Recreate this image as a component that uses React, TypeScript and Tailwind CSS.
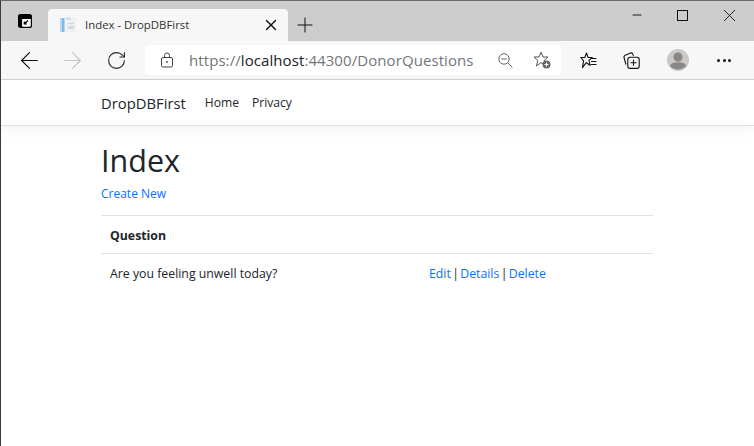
import { Minus, Plus, RotateCw, X, ArrowLeft, ArrowRight } from "lucide-react";

function TabIcon() {
  return (
    <svg width="16" height="16" viewBox="0 0 16 16" fill="none" stroke="#000" strokeWidth="1.2">
      <rect x="1.6" y="1.6" width="12.8" height="12.8" rx="2" fill="#fff" />
      <path d="M2 3a1 1 0 0 1 1-1h10a1 1 0 0 1 1 1v2.4H2z" fill="#000" />
      <path d="M2 3v10.5h2.5V3z" fill="#000" />
      <path d="M11 7.5 7.5 10.8 M7.3 8.4 V11 H10" strokeWidth="1.2" />
    </svg>
  );
}

function Favicon() {
  return (
    <svg width="16" height="16" viewBox="0 0 16 16" fill="none">
      <rect x="0" y="1" width="6" height="14" fill="#b5d8f1" />
      <rect x="2" y="1" width="2" height="14" fill="#7fb9e6" />
      <rect x="5" y="1" width="11" height="14" fill="#eef1f4" />
      <rect x="6" y="0" width="5" height="3" fill="#d9dfe4" />
      <rect x="8" y="6" width="6" height="1" fill="#ced4da" />
      <rect x="8" y="9" width="6" height="3" fill="#d6dbe0" />
    </svg>
  );
}

function Lock() {
  return (
    <svg width="14" height="16" viewBox="0 0 14 16" fill="none" stroke="#444" strokeWidth="1">
      <rect x="1.5" y="5.5" width="11" height="9.5" rx="1.5" />
      <path d="M4.5 5.5V3.5a2.5 2.5 0 0 1 5 0v2" />
      <circle cx="7" cy="10" r="0.9" fill="#444" stroke="none" />
    </svg>
  );
}

function ZoomMinus() {
  return (
    <svg width="15" height="15" viewBox="0 0 15 15" fill="none" stroke="#666" strokeWidth="1">
      <circle cx="6" cy="6" r="5.2" />
      <path d="M3.4 6h5.2M9.8 9.8l4.6 4.6" />
    </svg>
  );
}

function StarPlus() {
  return (
    <svg width="18" height="18" viewBox="0 0 18 18" fill="none">
      <path d="M8 1.2 10 6h5l-3.8 3.3L12.3 14 8 11.6 3.4 15l1.4-5.6L1 6h5z" stroke="#555" strokeWidth="1" strokeLinejoin="round" fill="#fff" />
      <circle cx="13.5" cy="13.5" r="4" fill="#666" />
      <path d="M13.5 11.5v4M11.5 13.5h4" stroke="#fff" strokeWidth="1.1" />
    </svg>
  );
}

function Favorites() {
  return (
    <svg width="17" height="17" viewBox="0 0 17 17" fill="none" stroke="#111" strokeWidth="1.1">
      <path d="M6.5 1 8.1 5.5h4.2L9 8.3l1 5-3.7-2.6L2.4 15.6l1.2-6.8L.8 5.5h4z" strokeLinejoin="round" />
      <path d="M11.5 6.5h5M11 9.5h5.5M10.5 12.5h6" />
    </svg>
  );
}

function Collections() {
  return (
    <svg width="17" height="17" viewBox="0 0 17 17" fill="none" stroke="#111" strokeWidth="1.1">
      <path d="M3 12.5 1 5.5Q.7 4 2.2 3.3L7.5 1q1.5-.5 2.2.9l.8 2" />
      <rect x="4.8" y="5.2" width="11.4" height="11.2" rx="2.2" fill="#f7f7f7" />
      <path d="M10.5 7.8v6M7.5 10.8h6" />
    </svg>
  );
}

function Avatar() {
  return (
    <svg width="22" height="22" viewBox="0 0 22 22">
      <circle cx="11" cy="11" r="11" fill="#cbc9c7" />
      <circle cx="11" cy="8" r="4.6" fill="#8a8886" />
      <path d="M3 17c1-3 3.5-3.8 8-3.8s7 .8 8 3.8a11 11 0 0 1-16 0z" fill="#8a8886" />
    </svg>
  );
}

export default function App() {
  return (
    <div className="flex h-[446px] w-[754px] flex-col overflow-hidden border-l border-t border-l-[#3a3a3a] border-t-[#6a6a6a] bg-white font-['Open_Sans','Noto_Sans',sans-serif] text-[#212529]">
      {/* tab strip */}
      <div className="flex h-[40px] shrink-0 items-end bg-[#cdcdcd]">
        <div className="flex h-[40px] w-[47px] items-center justify-center">
          <TabIcon />
        </div>
        <div className="flex h-[32px] w-[240px] items-center rounded-t-[4px] bg-[#f7f7f7] pl-[12px] pr-[8px]">
          <Favicon />
          <span className="ml-[9px] flex-1 text-[11.4px] text-[#333]">Index - DropDBFirst</span>
          <X size={18} strokeWidth={1.8} className="text-[#111]" />
        </div>
        <div className="flex h-[32px] w-[34px] items-center justify-center">
          <Plus size={24} strokeWidth={1} className="text-[#111]" />
        </div>
        <div className="ml-auto flex h-[40px] items-start pr-[2px] text-[#111]">
          <div className="flex h-[28px] w-[46px] items-center justify-center"><Minus size={14} strokeWidth={1.6} /></div>
          <div className="flex h-[28px] w-[46px] items-center justify-center pr-[2px]">
            <span className="h-[11px] w-[11px] border border-[#111]" />
          </div>
          <div className="flex h-[28px] w-[46px] items-center justify-center"><X size={21} strokeWidth={1} /></div>
        </div>
      </div>

      {/* toolbar */}
      <div className="flex h-[39px] shrink-0 items-center border-b border-[#d2d2d2] bg-[#f7f7f7]">
        <div className="flex w-[144px] items-center pl-[15px]">
          <ArrowLeft size={27} strokeWidth={1} className="text-[#111]" />
          <ArrowRight size={27} strokeWidth={1} className="ml-[16px] text-[#c4c4c4]" />
          <RotateCw size={21} strokeWidth={1.2} className="ml-[20px] text-[#222]" />
        </div>
        <div className="flex h-[30px] w-[416px] items-center rounded-[4px] bg-white pl-[15px]">
          <Lock />
          <span className="ml-[15px] text-[15px] tracking-[0.08px] text-[#72767a]">
            https://<span className="text-[#202124]">localhost</span>:44300/DonorQuestions
          </span>
          <span className="ml-auto"><ZoomMinus /></span>
          <div className="ml-[20px] mr-[10px]"><StarPlus /></div>
        </div>
        <div className="ml-[19px]"><Favorites /></div>
        <div className="ml-[26px]"><Collections /></div>
        <div className="ml-[27px]"><Avatar /></div>
        <div className="ml-[28px] flex gap-[2.5px]">
          <span className="h-[3px] w-[3px] rounded-full bg-[#111]" />
          <span className="h-[3px] w-[3px] rounded-full bg-[#111]" />
          <span className="h-[3px] w-[3px] rounded-full bg-[#111]" />
        </div>
      </div>

      {/* site navbar */}
      <div className="flex h-[46px] shrink-0 items-center border-b border-[#dee2e6] bg-white pl-[100px] pt-[2px] shadow-[0_4px_12px_rgba(0,0,0,0.05)]">
        <span className="text-[14.8px]">DropDBFirst</span>
        <span className="ml-[19px] text-[12.1px]">Home</span>
        <span className="ml-[13px] text-[12.1px]">Privacy</span>
      </div>

      {/* page */}
      <div className="flex-1 pl-[100px] pr-[100px]">
        <h1 className="mt-[16px] text-[30.5px] font-medium leading-[36px] text-[#212529]">Index</h1>
        <a href="#" className="mt-[7px] block text-[12px] leading-[18px] text-[#0d6efd]">Create New</a>
        <table className="mt-[12px] w-[552px] border-collapse text-[12.3px]">
          <thead>
            <tr className="border-y border-[#dee2e6]">
              <th className="h-[38px] px-[9px] pt-[3px] text-left font-bold">Question</th>
              <th />
            </tr>
          </thead>
          <tbody>
            <tr>
              <td className="h-[38px] w-[319px] px-[9px] pt-[2px]">Are you feeling unwell today?</td>
              <td className="h-[38px] px-[9px] pt-[2px] [word-spacing:-1.9px]">
                <a href="#" className="text-[#0d6efd]">Edit</a> |{" "}
                <a href="#" className="text-[#0d6efd]">Details</a> |{" "}
                <a href="#" className="text-[#0d6efd]">Delete</a>
              </td>
            </tr>
          </tbody>
        </table>
      </div>
    </div>
  );
}
